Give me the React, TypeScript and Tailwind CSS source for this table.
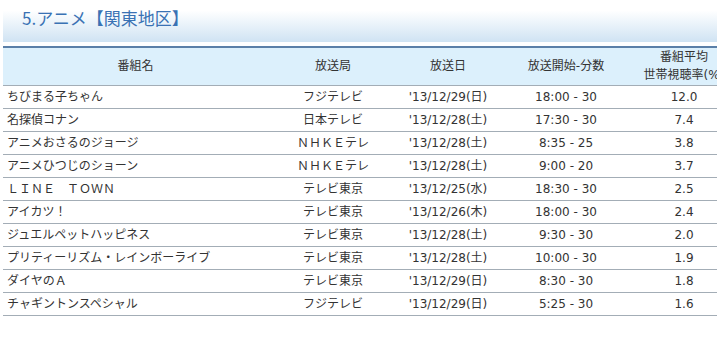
const rows: [string, string, string, string, string][] = [
  ['ちびまる子ちゃん', 'フジテレビ', "'13/12/29(日)", '18:00 - 30', '12.0'],
  ['名探偵コナン', '日本テレビ', "'13/12/28(土)", '17:30 - 30', '7.4'],
  ['アニメおさるのジョージ', 'ＮＨＫＥテレ', "'13/12/28(土)", '8:35 - 25', '3.8'],
  ['アニメひつじのショーン', 'ＮＨＫＥテレ', "'13/12/28(土)", '9:00 - 20', '3.7'],
  ['ＬＩＮＥ　ＴＯＷＮ', 'テレビ東京', "'13/12/25(水)", '18:30 - 30', '2.5'],
  ['アイカツ！', 'テレビ東京', "'13/12/26(木)", '18:00 - 30', '2.4'],
  ['ジュエルペットハッピネス', 'テレビ東京', "'13/12/28(土)", '9:30 - 30', '2.0'],
  ['プリティーリズム・レインボーライブ', 'テレビ東京', "'13/12/28(土)", '10:00 - 30', '1.9'],
  ['ダイヤのＡ', 'テレビ東京', "'13/12/29(日)", '8:30 - 30', '1.8'],
  ['チャギントンスペシャル', 'フジテレビ', "'13/12/29(日)", '5:25 - 30', '1.6'],
];

export default function App() {
  return (
    <div
      className="w-[717px] h-[354px] overflow-hidden bg-white text-[#333]"
      style={{ fontFamily: '"DejaVu Sans", "Noto Sans CJK JP", sans-serif' }}
    >
      {/* section title band */}
      <div className="ml-[3px] h-[42px] bg-gradient-to-b from-white from-25% to-[#cfe3f3] pl-[19px] pt-[7px]">
        <h2 className="text-[17px] leading-[22px] text-[#3a72b4]" style={{ fontFamily: '"Noto Sans CJK JP", sans-serif' }}>
          5.アニメ【関東地区】
        </h2>
      </div>

      <div className="ml-[3px] mt-[4px] w-[731px]">
        <table className="w-[731px] table-fixed border-collapse text-[12px]">
          <colgroup>
            <col className="w-[265px]" />
            <col className="w-[130px]" />
            <col className="w-[100px]" />
            <col className="w-[136px]" />
            <col className="w-[100px]" />
          </colgroup>
          <thead>
            <tr className="h-[38px] border-t-2 border-t-[#5a7fa8] bg-[#dcf0fc] text-center leading-[18px]">
              <th className="font-normal">番組名</th>
              <th className="font-normal">放送局</th>
              <th className="font-normal">放送日</th>
              <th className="font-normal">放送開始-分数</th>
              <th className="font-normal whitespace-nowrap">
                番組平均
                <br />
                世帯視聴率(%)
              </th>
            </tr>
          </thead>
          <tbody>
            {rows.map((r, i) => (
              <tr key={i} className="h-[23px] border-t border-b border-[#a3adb6] leading-[22px]">
                <td className="pl-[4px] text-left whitespace-nowrap">{r[0]}</td>
                <td className="text-center">{r[1]}</td>
                <td className="text-center">{r[2]}</td>
                <td className="text-center">{r[3]}</td>
                <td className="text-center">{r[4]}</td>
              </tr>
            ))}
          </tbody>
        </table>
      </div>
    </div>
  );
}
